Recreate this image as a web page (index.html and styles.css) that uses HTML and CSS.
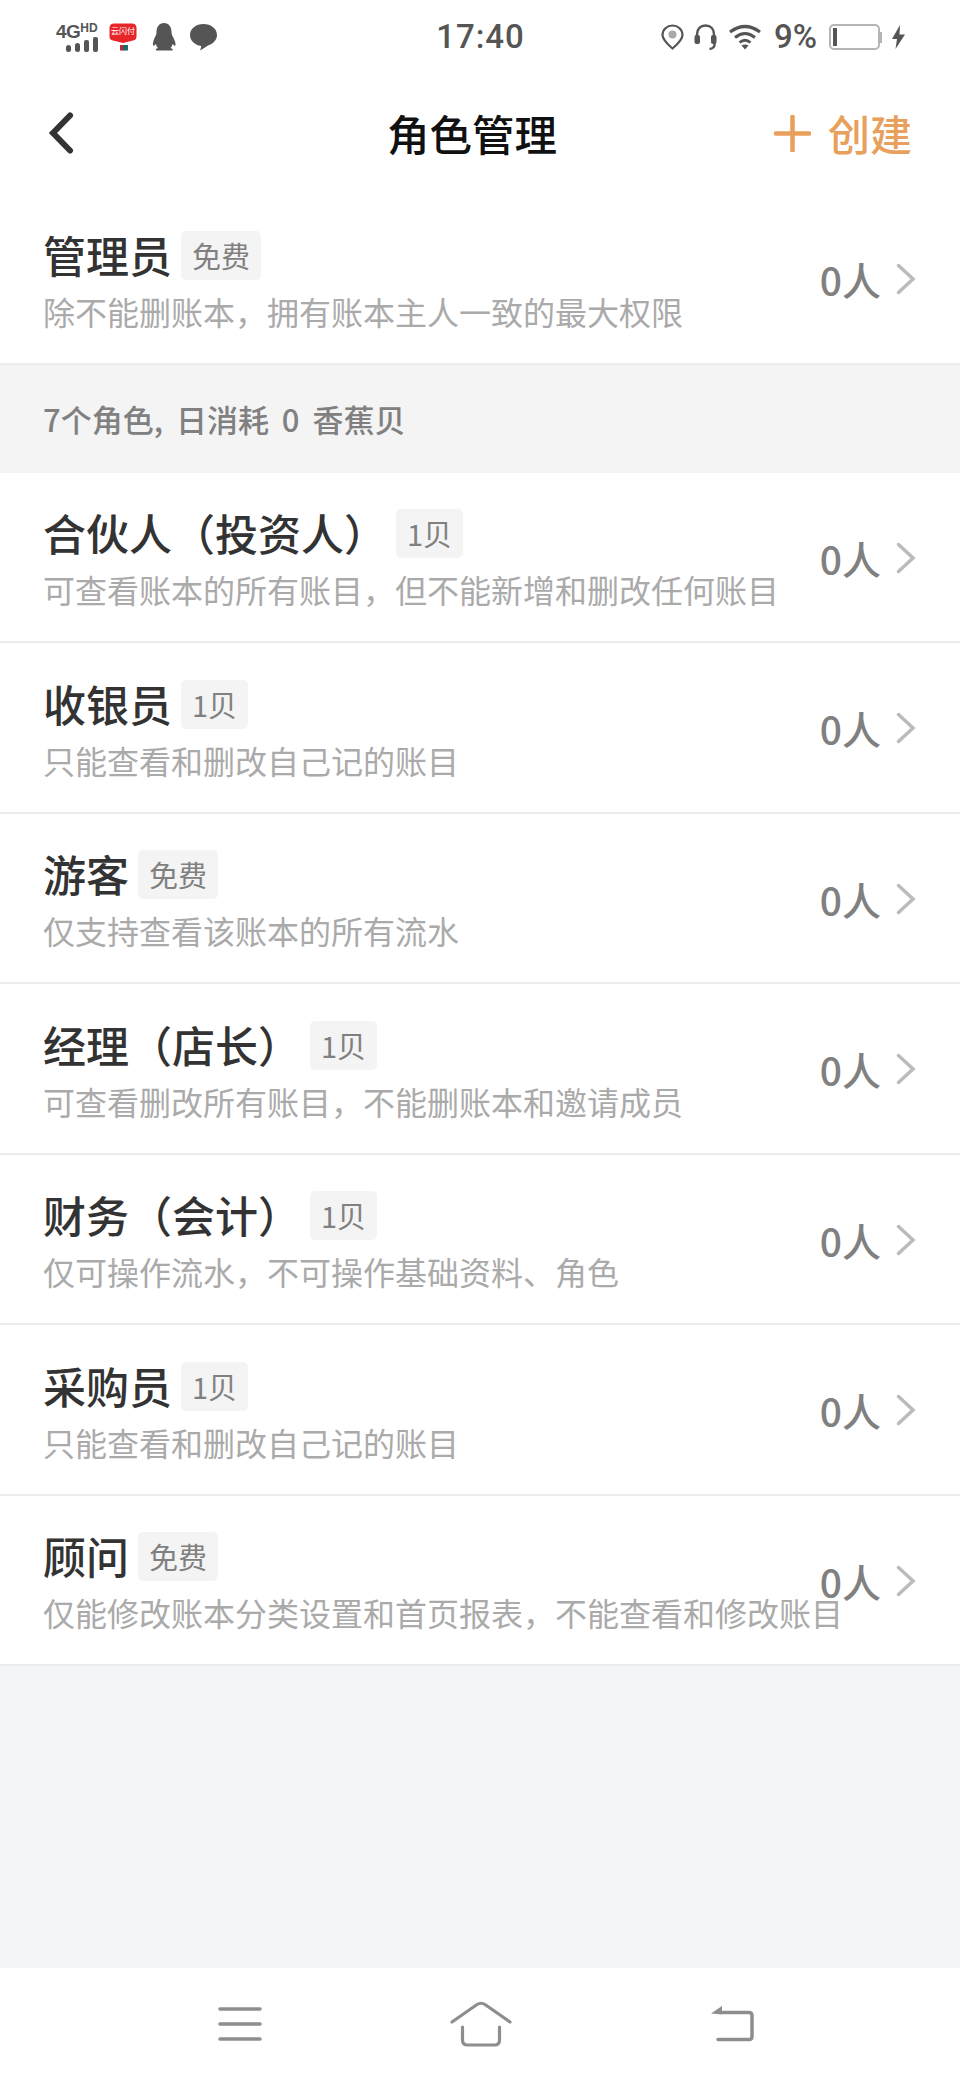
FILE: index.html
```html
<!DOCTYPE html>
<html lang="zh-CN">
<head>
<meta charset="utf-8">
<title>角色管理</title>
<link rel="stylesheet" href="styles.css">
</head>
<body>
<div class="page">
  <header class="status">
    <div class="status-left">
      <div class="net">
        <div class="net-text"><span class="net-4g">4G</span><span class="net-hd">HD</span></div>
        <svg class="net-bars" width="32" height="15" viewBox="0 0 32 15"><g fill="#555"><rect x="0" y="8" width="5" height="7" rx="2.5"/><rect x="9" y="6" width="5" height="9" rx="2.5"/><rect x="18" y="3" width="5" height="12" rx="2"/><rect x="27" y="0" width="5" height="15" rx="2"/></g></svg>
      </div>
      <svg class="ic-red" width="28" height="28" viewBox="0 0 28 28"><path d="M5 0.500h18q4 0 4.500 4v9q0 3.500-3.500 4l-6 1.500-4 1-4-1-6-1.500q-3.500-.5-3.500-4v-9q.5-4 4.500-4z" fill="#e8262a"/><text x="14" y="11" text-anchor="middle" class="red-text">云闪付</text><rect x="11" y="22" width="4" height="5.500" fill="#c8262a"/><rect x="14" y="22" width="5" height="5.500" fill="#1d6a70"/></svg>
      <svg class="ic-qq" width="24" height="28" viewBox="0 0 24 28"><path d="M12 0c5 0 7.500 4 7.500 9 0 2 .5 3 1.500 5s3 6 2.500 8c-.5 1.500-2 0-3-1-.3 2-1 3-2 4 2 .5 2.500 1.500 2 2.500H4c-.5-1 0-2 2-2.500-1-1-1.700-2-2-4-1 1-2.500 2.500-3 1C.5 20 2 16 3 14s1.500-3 1.500-5C4.500 4 7 0 12 0z" fill="#555"/></svg>
      <svg class="ic-bubble" width="27" height="27" viewBox="0 0 27 27"><path d="M13.500 0C21 0 27 4.700 27 11c0 5-3.800 9-9 10.500-2.500 1.500-5 3.500-8 5 .8-1.800 1.200-3.300 1.200-4.500C4.800 21 0 16.600 0 11 0 4.700 6 0 13.500 0z" fill="#555"/></svg>
    </div>
    <div class="status-time">17:40</div>
    <div class="status-right">
      <svg width="23" height="26" viewBox="0 0 23 26"><path d="M11.500 1.500c5.500 0 10 4 10 9.500 0 4-3.500 8-10 13.500C5 19 1.500 15 1.500 11c0-5.500 4.500-9.500 10-9.500z" fill="none" stroke="#555" stroke-width="2.200"/><circle cx="11.500" cy="10.500" r="4" fill="#aaa"/></svg>
      <svg class="ic-head" width="23" height="27" viewBox="0 0 23 27"><path d="M3 14V10.500C3 5 6.500 1.500 11.500 1.500S20 5 20 10.500V14" fill="none" stroke="#555" stroke-width="2.400"/><rect x="0.500" y="11" width="5.500" height="9" rx="2" fill="#555"/><rect x="17" y="11" width="5.500" height="9" rx="2" fill="#555"/><path d="M20.500 19c.5 4-1.500 5.500-5 6" fill="none" stroke="#555" stroke-width="2.400"/></svg>
      <svg class="ic-wifi" width="32" height="26" viewBox="0 0 32 26"><path d="M1 8Q16-3 31 8" fill="none" stroke="#555" stroke-width="3.200"/><path d="M6 13.500Q16 5.500 26 13.500" fill="none" stroke="#555" stroke-width="3"/><path d="M10.500 18.500Q16 14 21.500 18.500" fill="none" stroke="#555" stroke-width="2.800"/><path d="M12.500 21.500Q16 19.500 19.500 21.500L16 25.500z" fill="#555"/></svg>
      <span class="pct">9%</span>
      <div class="battery"><div class="batt-body"><i class="batt-fill"></i></div><i class="batt-nub"></i></div>
      <svg class="ic-bolt" width="13" height="24" viewBox="0 0 13 24"><path d="M8 0L0 14h5l-1.500 10L13 9.500H7.500z" fill="#555"/></svg>
    </div>
  </header>

  <nav class="nav">
    <svg class="back" width="26" height="42" viewBox="0 0 26 42"><path d="M22 3.500L5 21l17 17.500" fill="none" stroke="#333" stroke-width="6" stroke-linecap="round" stroke-linejoin="miter"/></svg>
    <h1 class="title">角色管理</h1>
    <div class="create">
      <svg width="37" height="37" viewBox="0 0 37 37"><path d="M18.500 1.500v34M1.500 18.500h34" stroke="#e8a05c" stroke-width="4.500" stroke-linecap="round"/></svg>
      <span>创建</span>
    </div>
  </nav>

  <section class="list">
    <a class="row">
      <div class="main">
        <div class="head"><span class="name">管理员</span><span class="tag">免费</span></div>
        <div class="desc">除不能删账本，拥有账本主人一致的最大权限</div>
      </div>
      <div class="count">0人</div>
      <svg class="chev" width="20" height="32" viewBox="0 0 20 32"><path d="M2.500 2.500L17 16 2.500 29.500" fill="none" stroke="#bbb" stroke-width="3.500" stroke-linecap="round"/></svg>
    </a>
  </section>

  <div class="band">7个角色, 日消耗 0 香蕉贝</div>

  <section class="list">
    <a class="row">
      <div class="main">
        <div class="head"><span class="name">合伙人（投资人）</span><span class="tag">1贝</span></div>
        <div class="desc">可查看账本的所有账目，但不能新增和删改任何账目</div>
      </div>
      <div class="count">0人</div>
      <svg class="chev" width="20" height="32" viewBox="0 0 20 32"><path d="M2.500 2.500L17 16 2.500 29.500" fill="none" stroke="#bbb" stroke-width="3.500" stroke-linecap="round"/></svg>
    </a>
    <a class="row">
      <div class="main">
        <div class="head"><span class="name">收银员</span><span class="tag">1贝</span></div>
        <div class="desc">只能查看和删改自己记的账目</div>
      </div>
      <div class="count">0人</div>
      <svg class="chev" width="20" height="32" viewBox="0 0 20 32"><path d="M2.500 2.500L17 16 2.500 29.500" fill="none" stroke="#bbb" stroke-width="3.500" stroke-linecap="round"/></svg>
    </a>
    <a class="row">
      <div class="main">
        <div class="head"><span class="name">游客</span><span class="tag">免费</span></div>
        <div class="desc">仅支持查看该账本的所有流水</div>
      </div>
      <div class="count">0人</div>
      <svg class="chev" width="20" height="32" viewBox="0 0 20 32"><path d="M2.500 2.500L17 16 2.500 29.500" fill="none" stroke="#bbb" stroke-width="3.500" stroke-linecap="round"/></svg>
    </a>
    <a class="row">
      <div class="main">
        <div class="head"><span class="name">经理（店长）</span><span class="tag">1贝</span></div>
        <div class="desc">可查看删改所有账目，不能删账本和邀请成员</div>
      </div>
      <div class="count">0人</div>
      <svg class="chev" width="20" height="32" viewBox="0 0 20 32"><path d="M2.500 2.500L17 16 2.500 29.500" fill="none" stroke="#bbb" stroke-width="3.500" stroke-linecap="round"/></svg>
    </a>
    <a class="row">
      <div class="main">
        <div class="head"><span class="name">财务（会计）</span><span class="tag">1贝</span></div>
        <div class="desc">仅可操作流水，不可操作基础资料、角色</div>
      </div>
      <div class="count">0人</div>
      <svg class="chev" width="20" height="32" viewBox="0 0 20 32"><path d="M2.500 2.500L17 16 2.500 29.500" fill="none" stroke="#bbb" stroke-width="3.500" stroke-linecap="round"/></svg>
    </a>
    <a class="row">
      <div class="main">
        <div class="head"><span class="name">采购员</span><span class="tag">1贝</span></div>
        <div class="desc">只能查看和删改自己记的账目</div>
      </div>
      <div class="count">0人</div>
      <svg class="chev" width="20" height="32" viewBox="0 0 20 32"><path d="M2.500 2.500L17 16 2.500 29.500" fill="none" stroke="#bbb" stroke-width="3.500" stroke-linecap="round"/></svg>
    </a>
    <a class="row">
      <div class="main">
        <div class="head"><span class="name">顾问</span><span class="tag">免费</span></div>
        <div class="desc">仅能修改账本分类设置和首页报表，不能查看和修改账目</div>
      </div>
      <div class="count">0人</div>
      <svg class="chev" width="20" height="32" viewBox="0 0 20 32"><path d="M2.500 2.500L17 16 2.500 29.500" fill="none" stroke="#bbb" stroke-width="3.500" stroke-linecap="round"/></svg>
    </a>
  </section>

  <div class="spacer"></div>

  <footer class="sysbar">
    <svg width="44" height="36" viewBox="0 0 44 36"><path d="M2 3h40M2 18h40M2 33h40" stroke="#8e8e8e" stroke-width="3.500" stroke-linecap="round"/></svg>
    <svg class="sys-home" width="62" height="46" viewBox="0 0 62 46"><path d="M2 21L27 3.500q4-2.500 8 0L60 21" fill="none" stroke="#8e8e8e" stroke-width="3.200" stroke-linecap="round"/><path d="M12.500 26v13q0 5 5 5h27q5 0 5-5V26" fill="none" stroke="#8e8e8e" stroke-width="3.200" stroke-linecap="round"/></svg>
    <svg class="sys-back" width="44" height="38" viewBox="0 0 44 38"><path d="M13 7.500h26q3 0 3 3v21q0 3-3 3H8" fill="none" stroke="#8e8e8e" stroke-width="3.500" stroke-linecap="round"/><path d="M1 8.500L12 1v8.500z" fill="#8e8e8e"/></svg>
  </footer>
</div>
</body>
</html>
```

FILE: styles.css
```css
* { box-sizing: border-box; }
html, body { margin: 0; padding: 0; }
body {
  font-family: "Noto Sans CJK SC", "Noto Sans", sans-serif;
  background: #f4f5f7;
}
.page {
  width: 960px;
  height: 2080px;
  display: flex;
  flex-direction: column;
  background: #f4f5f7;
  overflow: hidden;
}

/* status bar */
.status {
  height: 60px;
  background: #fff;
  display: grid;
  grid-template-columns: 1fr auto 1fr;
  align-items: center;
  padding: 14px 55px 0 56px;
}
.status-left { display: flex; align-items: center; }
.status-time {
  font-family: Roboto, "Liberation Sans", sans-serif;
  font-weight: 500;
  font-size: 33px;
  letter-spacing: 1px;
  color: #555;
  line-height: 36px;
}
.status-right { display: flex; align-items: center; justify-content: flex-end; }
.net { width: 42px; height: 29px; position: relative; }
.net-text {
  display: flex;
  align-items: flex-start;
  font-family: "Liberation Sans", sans-serif;
  font-weight: 700;
  color: #555;
  height: 15px;
}
.net-4g { font-size: 19px; line-height: 17px; letter-spacing: -0.5px; }
.net-hd { font-size: 12px; line-height: 11px; }
.net-bars { position: absolute; right: 0; bottom: 0; }
.ic-red { margin-left: 11px; }
.ic-qq { margin-left: 15px; }
.ic-bubble { margin-left: 14px; }
.red-text {
  font-family: "Noto Sans CJK SC", sans-serif;
  font-size: 8px;
  fill: #fff;
}
.ic-head { margin-left: 10px; }
.ic-wifi { margin-left: 12px; }
.pct {
  font-family: Roboto, "Liberation Sans", sans-serif;
  font-weight: 500;
  font-size: 33px;
  line-height: 30px;
  color: #555;
  margin-left: 13px;
}
.battery { display: flex; align-items: center; margin-left: 12px; }
.batt-body {
  width: 51px;
  height: 26px;
  border: 2px solid #b5b5b5;
  border-radius: 5px;
  padding: 2px;
  display: flex;
}
.batt-fill { width: 4px; background: #555; display: block; }
.batt-nub { width: 2px; height: 11px; background: #b5b5b5; display: block; }
.ic-bolt { margin-left: 10px; }

/* nav */
.nav {
  height: 134px;
  background: #fff;
  display: grid;
  grid-template-columns: 339px auto 1fr;
  align-items: center;
  padding: 12px 48px 0 48px;
}
.back { display: block; }
.title {
  margin: 0;
  font-size: 42.500px;
  font-weight: 500;
  color: #111;
  line-height: 60px;
}
.create {
  display: flex;
  align-items: center;
  justify-content: flex-end;
  gap: 17px;
  color: #e8a05c;
  font-size: 42px;
  font-weight: 500;
  line-height: 60px;
}

/* list */
.list { background: #fff; display: flex; flex-direction: column; }
.row {
  height: 170.5px;
  border-bottom: 2px solid #ececec;
  display: flex;
  align-items: center;
  padding: 0 44px 0 43px;
}
.main { flex: 1; min-width: 0; padding-top: 6px; }
.head { display: flex; align-items: center; height: 50px; }
.name {
  font-size: 43px;
  font-weight: 500;
  color: #333;
  line-height: 50px;
  white-space: nowrap;
}
.tag {
  margin: 3px 0 0 9px;
  height: 49px;
  padding: 0 11px;
  background: #f4f4f4;
  border-radius: 5px;
  font-size: 29px;
  color: #808080;
  line-height: 49px;
  white-space: nowrap;
}
.desc {
  margin-top: 9px;
  font-size: 32px;
  color: #aaa;
  line-height: 46px;
  white-space: nowrap;
}
.count {
  font-size: 39px;
  font-weight: 500;
  color: #808080;
  line-height: 50px;
  white-space: nowrap;
  margin: 2px 0 0 8px;
}
.chev { margin: 2px 0 0 15px; flex: none; }

/* band */
.band {
  height: 108px;
  padding-left: 43px;
  background: #f4f4f4;
  display: flex;
  align-items: center;
  font-size: 31px;
  font-weight: 500;
  word-spacing: 6px;
  color: #808080;
}

.spacer { flex: 1; }

/* system bar */
.sysbar {
  height: 112px;
  background: #fff;
  display: flex;
  align-items: center;
  padding: 0 0 0 218px;
}
.sys-home { margin-left: 188px; }
.sys-back { margin-left: 198px; }
```
